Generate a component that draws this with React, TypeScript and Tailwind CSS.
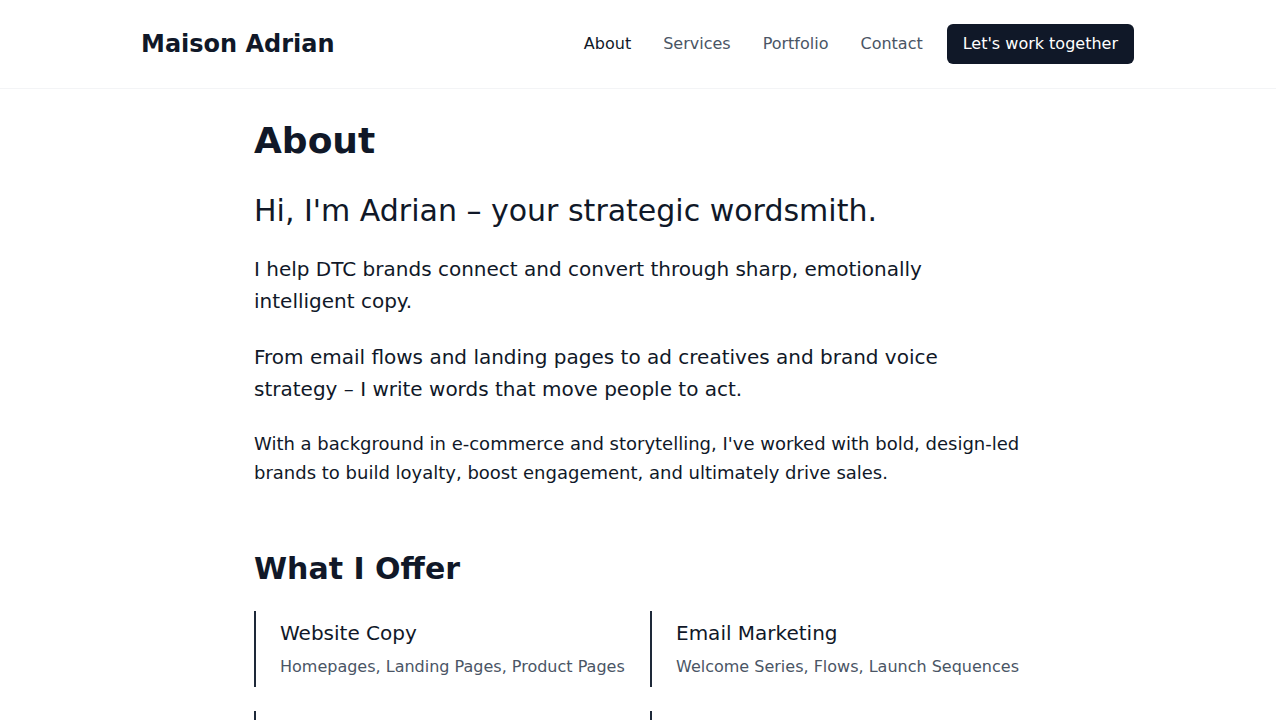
import React from "react";

const services = [
  { title: "Website Copy", desc: "Homepages, Landing Pages, Product Pages" },
  { title: "Email Marketing", desc: "Welcome Series, Flows, Launch Sequences" },
  { title: "Ad Creatives", desc: "Meta Ads, Google Ads, Social Campaigns" },
  { title: "Brand Voice", desc: "Messaging Guides, Taglines, Tone of Voice" },
];

export default function App() {
  return (
    <div
      className="w-[1276px] min-h-screen bg-white text-gray-900"
      style={{ fontFamily: '"DejaVu Sans", "Noto Sans", sans-serif' }}
    >
      <header className="border-b border-gray-100">
        <div className="max-w-5xl mx-auto pl-[15px] pr-4 py-6 flex items-center justify-between">
          <div className="text-2xl font-bold text-gray-900">Maison Adrian</div>
          <nav className="flex items-center">
            <ul className="flex items-center gap-8 text-base">
              <li className="text-gray-900">About</li>
              <li className="text-gray-600">Services</li>
              <li className="text-gray-600">Portfolio</li>
              <li className="text-gray-600">Contact</li>
            </ul>
            <button className="ml-6 h-10 px-4 rounded-md bg-gray-900 text-white text-base">
              Let's work together
            </button>
          </nav>
        </div>
      </header>

      <main className="max-w-3xl mx-auto pt-8 pb-16">
        <section>
          <h1 className="text-4xl font-bold mb-8">About</h1>
          <h2 className="text-3xl mb-6">Hi, I'm Adrian – your strategic wordsmith.</h2>
          <p className="text-xl leading-8 mb-6">
            I help DTC brands connect and convert through sharp, emotionally intelligent copy.
          </p>
          <p className="text-xl leading-8 mb-6">
            From email flows and landing pages to ad creatives and brand voice strategy – I write words that move people to act.
          </p>
          <p className="text-lg leading-relaxed">
            With a background in e-commerce and storytelling, I've worked with bold, design-led brands to build loyalty, boost engagement, and ultimately drive sales.
          </p>
        </section>

        <section className="mt-[63px]">
          <h2 className="text-3xl font-bold mb-6">What I Offer</h2>
          <div className="grid grid-cols-2 gap-6">
            {services.map((s) => (
              <div key={s.title} className="border-l-2 border-gray-800 pl-6 py-2">
                <h3 className="text-xl mb-2 text-gray-900">{s.title}</h3>
                <p className="text-base text-gray-600">{s.desc}</p>
              </div>
            ))}
          </div>
        </section>
      </main>
    </div>
  );
}
